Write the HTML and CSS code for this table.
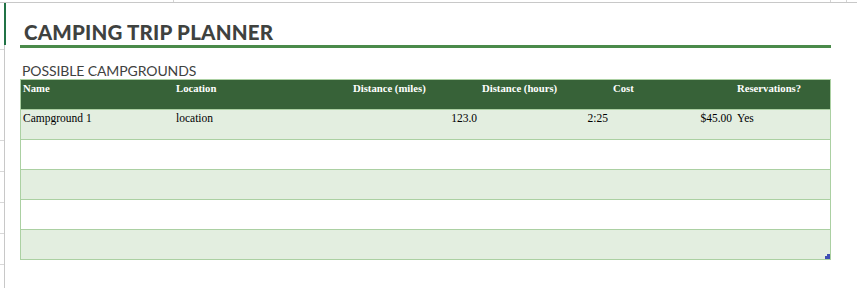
FILE: index.html
```html
<!DOCTYPE html>
<html>
<head>
<meta charset="utf-8">
<link rel="stylesheet" href="styles.css">
</head>
<body>
<div class="sheet">
  <div class="topticks"><span class="tk t1"></span><span class="tk t2"></span><span class="tk t3"></span></div>
  <div class="main">
    <div class="gutter">
      <div class="sel"></div>
      <div class="gl" style="height:46px"></div>
      <div class="gl" style="height:90px"></div>
      <div class="gl" style="height:30px"></div>
      <div class="gl" style="height:30px"></div>
      <div class="gl" style="height:30px"></div>
      <div class="gl" style="height:30px"></div>
    </div>
    <div class="content">
      <h1 class="title">CAMPING TRIP PLANNER</h1>
      <h2 class="subtitle">POSSIBLE CAMPGROUNDS</h2>
      <div class="table">
        <div class="row head">
          <div class="c">Name</div>
          <div class="c">Location</div>
          <div class="c">Distance (miles)</div>
          <div class="c">Distance (hours)</div>
          <div class="c">Cost</div>
          <div class="c">Reservations?</div>
        </div>
        <div class="row alt">
          <div class="c">Campground 1</div>
          <div class="c">location</div>
          <div class="c num">123.0</div>
          <div class="c num">2:25</div>
          <div class="c num">$45.00</div>
          <div class="c">Yes</div>
        </div>
        <div class="row"><div class="c"></div></div>
        <div class="row alt"><div class="c"></div></div>
        <div class="row"><div class="c"></div></div>
        <div class="row alt last"><div class="c"></div><span class="handle"></span></div>
      </div>
    </div>
  </div>
</div>
</body>
</html>
```
FILE: styles.css
```css
html, body {
  margin: 0;
  padding: 0;
  background: #ffffff;
}
.sheet {
  width: 857px;
  height: 288px;
  overflow: hidden;
  position: relative;
}
.topticks {
  height: 2px;
  border-bottom: 1px solid #c8c8c8;
  position: relative;
}
.tk {
  position: absolute;
  top: 0;
  width: 1px;
  height: 2px;
  background: #d4d4d4;
}
.t1 { left: 173px; }
.t2 { left: 830px; }
.t3 { left: 846px; }
.main {
  display: flex;
  align-items: flex-start;
}
.gutter {
  width: 4px;
  height: 285px;
  border-right: 1px solid #c8c8c8;
  position: relative;
}
.gl {
  border-bottom: 1px solid #d8d8d8;
}
.sel {
  position: absolute;
  left: 4px;
  top: 0;
  width: 2px;
  height: 42px;
  background: #217346;
}
.content {
  margin-left: 15px;
  width: 811px;
}
.title {
  margin: 0;
  padding: 17px 0 0 4px;
  height: 25px;
  font-family: "Lato", "Open Sans", sans-serif;
  font-weight: 900;
  font-size: 20.5px;
  line-height: 25px;
  color: #3f423f;
  letter-spacing: 0.2px;
  border-bottom: 3px solid #4a8a4a;
}
.subtitle {
  margin: 0;
  padding: 14px 0 0 2px;
  height: 17px;
  font-family: "Lato", "Open Sans", sans-serif;
  font-weight: 400;
  font-size: 14px;
  line-height: 17px;
  color: #3f423f;
  letter-spacing: -0.1px;
}
.table {
  border: 1px solid #abd0a2;
  border-bottom: none;
  font-family: "Liberation Serif", "Times New Roman", serif;
  color: #000;
}
.row {
  display: grid;
  grid-template-columns: 153px 177px 129px 131px 124px 95px;
  height: 29px;
  border-bottom: 1px solid #abd0a2;
  position: relative;
}
.row.alt {
  background: #e3eee0;
}
.row.head {
  background: #376238;
  color: #ffffff;
  font-weight: bold;
  font-size: 10.7px;
}
.head .c {
  padding: 2px 2px 0;
  font-size: 10.7px;
  line-height: 13px;
}
.c {
  padding: 0 2px;
  font-size: 11.5px;
  line-height: 14px;
  padding-top: 1px;
}
.num {
  text-align: right;
  padding-right: 3px;
}
.handle {
  position: absolute;
  right: 0;
  bottom: 0;
  width: 5px;
  height: 5px;
  background: #3f4fb4;
  clip-path: polygon(100% 0, 100% 100%, 0 100%, 0 40%, 40% 40%, 40% 0);
}
```
